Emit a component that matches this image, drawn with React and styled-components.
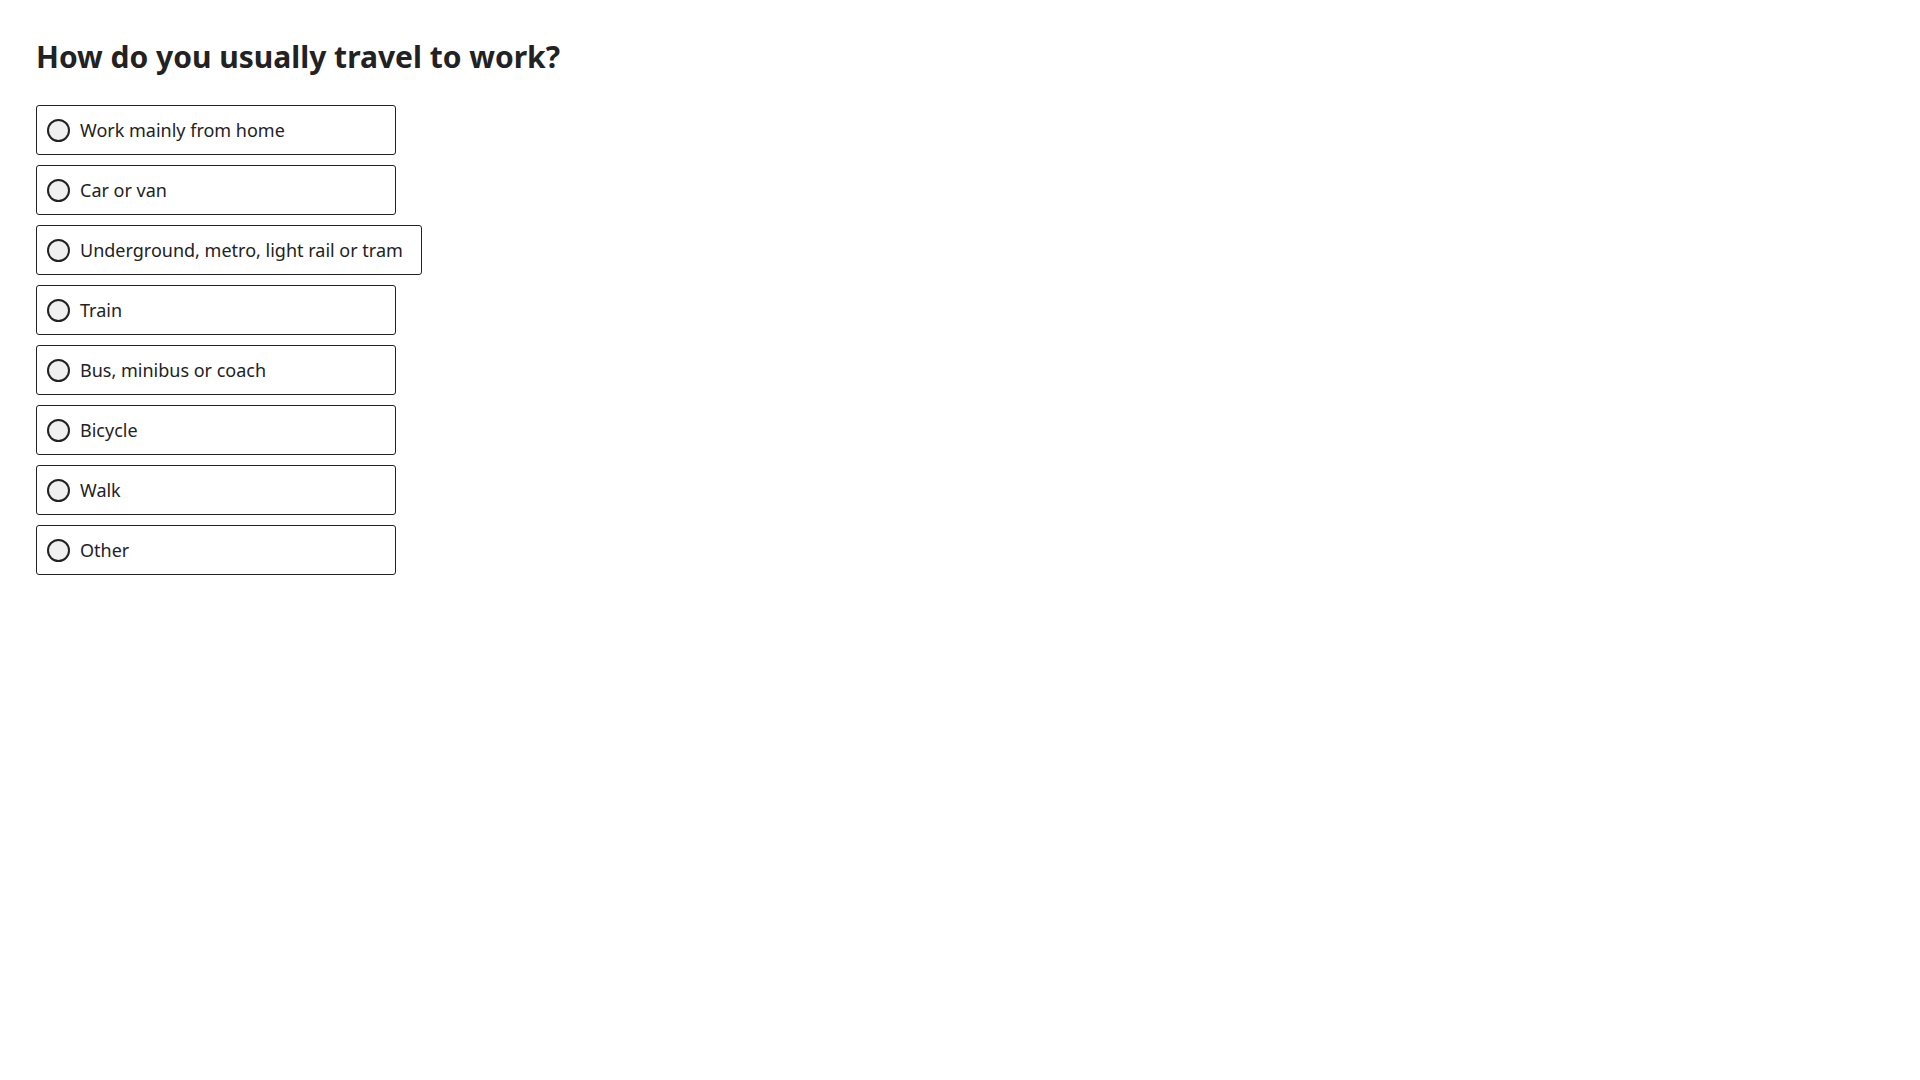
import React from "react";
import styled, { createGlobalStyle } from "styled-components";

const GlobalStyle = createGlobalStyle`
  html, body {
    margin: 0;
    padding: 0;
    background: #ffffff;
  }
  body {
    font-family: "Noto Sans", "Open Sans", sans-serif;
    color: #222222;
  }
`;

const Page = styled.main`
  padding: 38px 36px;
`;

const Fieldset = styled.fieldset`
  border: 0;
  margin: 0;
  padding: 0;
  min-width: 0;
`;

const Legend = styled.legend`
  padding: 0;
  margin: 0 0 29px;
  font-size: 30px;
  line-height: 38px;
  font-weight: 700;
  color: #222222;
`;

const Options = styled.div`
  display: flex;
  flex-direction: column;
  align-items: flex-start;
  gap: 10px;
`;

const Option = styled.label`
  box-sizing: border-box;
  display: flex;
  align-items: center;
  gap: 10px;
  min-width: 360px;
  height: 50px;
  padding: 0 18px 0 10px;
  border: 1px solid #222222;
  border-radius: 3px;
  background: #ffffff;
  cursor: pointer;
`;

const Radio = styled.input.attrs({ type: "radio" })`
  appearance: none;
  margin: 0;
  flex: 0 0 auto;
  box-sizing: border-box;
  width: 23px;
  height: 23px;
  border-radius: 50%;
  border: 2px solid #222222;
  background: #f0f0f0;
  cursor: pointer;

  &:checked {
    background: radial-gradient(circle, #222222 0 5px, #f0f0f0 6px);
  }
`;

const LabelText = styled.span`
  font-size: 18px;
  line-height: 24px;
  color: #222222;
  white-space: nowrap;
`;

const options = [
  "Work mainly from home",
  "Car or van",
  "Underground, metro, light rail or tram",
  "Train",
  "Bus, minibus or coach",
  "Bicycle",
  "Walk",
  "Other",
];

export default function App() {
  return (
    <>
      <GlobalStyle />
      <Page>
        <Fieldset>
          <Legend>How do you usually travel to work?</Legend>
          <Options>
            {options.map((o) => (
              <Option key={o}>
                <Radio name="travel" value={o} />
                <LabelText>{o}</LabelText>
              </Option>
            ))}
          </Options>
        </Fieldset>
      </Page>
    </>
  );
}
